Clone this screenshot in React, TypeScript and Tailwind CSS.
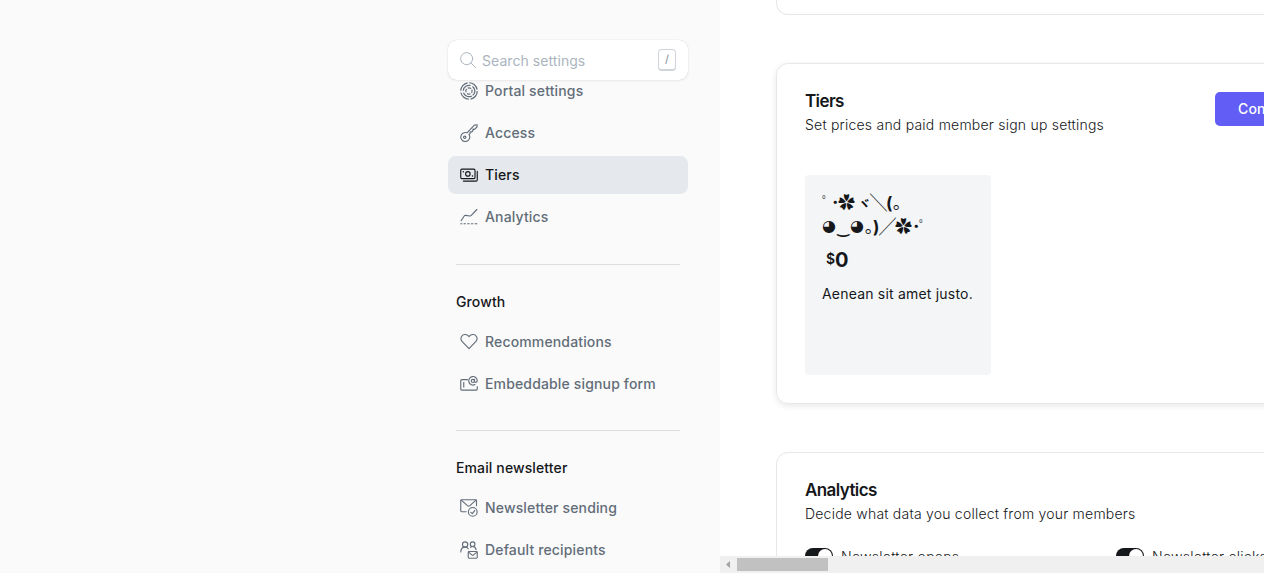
import type { ReactNode } from 'react';

function Icon({ children }: { children: ReactNode }) {
  return (
    <svg className="size-[18px] shrink-0" viewBox="0 0 24 24" fill="none" stroke="currentColor" strokeWidth="1.5" strokeLinecap="round" strokeLinejoin="round">
      {children}
    </svg>
  );
}

const PortalIcon = () => (
  <Icon>
    <g strokeLinecap="butt" strokeWidth="1.6">
      <circle cx="12" cy="12" r="11" strokeDasharray="15 2.28" />
      <circle cx="12" cy="12" r="7.6" strokeDasharray="13.4 2.5" transform="rotate(60 12 12)" />
      <circle cx="12" cy="12" r="4.2" strokeDasharray="4.6 2" transform="rotate(-30 12 12)" />
    </g>
  </Icon>
);
const KeyIcon = () => (
  <Icon>
    <circle cx="6.3" cy="17.7" r="1.6" />
    <path d="M12 14 13.500 12.500V10.500L15.500 10.700 17.300 9V6.900L19.300 7.200 22.600 4 22.900 1.100 19.500 1.300 9.300 11.800A6 6 0 1 0 12 14Z" />
  </Icon>
);
const TiersIcon = () => (
  <Icon>
    <rect x="1" y="4.2" width="19" height="12.6" rx="1.5" />
    <path d="M23 7.2v11.3a1.6 1.6 0 0 1-1.6 1.6H4.5" />
    <circle cx="10.5" cy="10.5" r="3" />
    <path d="M4.4 7.6h.1M16.6 13.4h.1" strokeWidth="2" />
  </Icon>
);
const AnalyticsIcon = () => (
  <Icon>
    <path d="M1.5 17 5.6 10.7c.5-.8 1.2-1 2-.9l5.4.8c.9.1 1.5 0 2-.7L22.5 2" />
    <path d="M1 21h1.5M5.3 21h2M10.2 21h2M15.1 21h2M20 21h2.5" />
  </Icon>
);
const HeartIcon = () => (
  <Icon>
    <path d="m12 20.800-9-9.4A5.6 5.6 0 0 1 1.9 5a5.5 5.5 0 0 1 8.8-1.400L12 4.900l1.300-1.300A5.5 5.5 0 0 1 22.100 5 5.6 5.6 0 0 1 21 11.400Z" />
  </Icon>
);
const FormIcon = () => (
  <Icon>
    <path d="M10 6.200H2.300C1.600 6.200 1 6.800 1 7.500v11.200c0 .8.600 1.400 1.300 1.400h19.400c.7 0 1.300-.6 1.300-1.400v-3.200" />
    <path d="M5 10v6" />
    <circle cx="17.200" cy="7.900" r="2.100" />
    <path d="M19.300 5.900v2.200c0 2.400 3.700 2.200 3.700-.4a5.700 5.700 0 1 0-3 5.100" />
  </Icon>
);
const SendingIcon = () => (
  <Icon>
    <path d="M8.300 17H2.200A1.200 1.200 0 0 1 1 15.800V2.200C1 1.500 1.500 1 2.200 1h18.600c.7 0 1.200.5 1.200 1.200V9" />
    <path d="m1.600 1.600 8.300 7.200c1 .8 2.200.8 3.200 0l8.300-7.200" />
    <circle cx="17" cy="17.200" r="5.800" />
    <path d="m19.600 15.400-3.200 4.100-2-1.700" />
  </Icon>
);
const RecipientsIcon = () => (
  <Icon>
    <circle cx="6.800" cy="4.600" r="3.500" />
    <circle cx="16.800" cy="4.300" r="3.100" />
    <path d="M1 14.600c.2-3.700 2.400-6.500 5.800-6.500 1.900 0 3.300.9 4.200 2.300M14 8.600c.9-.8 1.800-1.200 2.800-1.200 2.400 0 4.100 1.600 4.700 4" />
    <rect x="11" y="14" width="12" height="9" rx="1.200" />
    <path d="m11.500 14.800 4.300 3.700c.7.600 1.700.6 2.400 0l4.300-3.700" />
  </Icon>
);

function NavItem({ icon, label, active }: { icon: ReactNode; label: string; active?: boolean }) {
  return (
    <a className={`flex h-[38px] shrink-0 items-center gap-2 rounded-lg pl-3 text-sm font-[450] ${active ? 'bg-[#e5e9ed] text-[#15171a]' : 'text-[#626d79]'}`}>
      {icon}
      <span className="-ml-px tracking-[0.15px]">{label}</span>
    </a>
  );
}

function NavHeading({ children, className }: { children: ReactNode; className: string }) {
  return (
    <div className={`mx-2 flex h-[59px] shrink-0 items-end border-t border-[#dddee2] pb-[11px] text-sm leading-5 font-[550] tracking-[0.12px] text-[#15171a] ${className}`}>
      <span>{children}</span>
    </div>
  );
}

function Sidebar() {
  return (
    <aside className="flex w-[720px] shrink-0 flex-col bg-[#fafafa] pt-10 pr-8 pl-[448px]">
      <div className="z-10 flex h-10 shrink-0 items-center rounded-[9px] bg-white pr-3 pl-3 shadow-[0_0_1px_rgba(0,0,0,0.22),0_1px_3px_rgba(0,0,0,0.06)]">
        <svg className="size-4 text-[#abb4be]" viewBox="0 0 24 24" fill="none" stroke="currentColor" strokeWidth="1.5" strokeLinecap="round">
          <circle cx="10" cy="10" r="9" />
          <path d="m16.500 16.500 6.700 6.700" />
        </svg>
        <span className="ml-1.5 flex-1 pt-0.5 text-sm tracking-[0.06px] text-[#abb4be]">Search settings</span>
        <span className="flex h-[22px] w-[18px] items-center justify-center rounded border border-b-2 border-[#ced4d9] text-[11px] text-[#7c8b9a]">/</span>
      </div>
      <nav className="-mt-2 flex flex-col gap-1">
        <NavItem icon={<PortalIcon />} label="Portal settings" />
        <NavItem icon={<KeyIcon />} label="Access" />
        <NavItem icon={<TiersIcon />} label="Tiers" active />
        <NavItem icon={<AnalyticsIcon />} label="Analytics" />
      </nav>
      <NavHeading className="mt-7">Growth</NavHeading>
      <nav className="flex flex-col gap-1">
        <NavItem icon={<HeartIcon />} label="Recommendations" />
        <NavItem icon={<FormIcon />} label="Embeddable signup form" />
      </nav>
      <NavHeading className="mt-[27px]">Email newsletter</NavHeading>
      <nav className="flex flex-col gap-1">
        <NavItem icon={<SendingIcon />} label="Newsletter sending" />
        <NavItem icon={<RecipientsIcon />} label="Default recipients" />
      </nav>
    </aside>
  );
}

function SectionTitle({ title, text }: { title: string; text: string }) {
  return (
    <div>
      <h2 className="text-[17px] leading-6 font-[630] tracking-[-0.6px]">{title}</h2>
      <p className="text-sm leading-6 font-light tracking-[0.22px]">{text}</p>
    </div>
  );
}

function Toggle({ label }: { label: string }) {
  return (
    <div className="flex w-[311px] shrink-0 items-start gap-2">
      <span className="flex h-4 w-7 justify-end rounded-full bg-[#15171a] p-px">
        <span className="size-3.5 rounded-full bg-white" />
      </span>
      <span className="-mt-px text-sm leading-5 font-light tracking-[0.28px] text-[#15171a]">{label}</span>
    </div>
  );
}

function TierName() {
  return (
    <div className="text-[17px] leading-6 font-bold whitespace-nowrap">
      <div className="flex h-6">
        <span className="w-[9px] text-[15px] font-light">ﾟ</span>
        <span className="w-[7px]">･</span>
        <span className="w-[20px]">✿</span>
        <span className="w-[12px] text-[13px]">ヾ</span>
        <span className="w-4 font-thin">╲</span>
        <span className="w-[7px]">(</span>
        <span className="font-normal">｡</span>
      </div>
      <div className="flex h-6">
        <span className="w-[14px] font-['DejaVu_Sans'] text-base leading-[22px] font-normal">◕</span>
        <span className="w-[14px]">‿</span>
        <span className="w-[15px] font-['DejaVu_Sans'] text-base leading-[22px] font-normal">◕</span>
        <span className="w-[8px] font-normal">｡</span>
        <span className="w-[6px]">)</span>
        <span className="w-[16px] font-thin">╱</span>
        <span className="w-[17px]">✿</span>
        <span className="w-[7px]">･</span>
        <span className="text-[15px] font-light">ﾟ</span>
      </div>
    </div>
  );
}

function Content() {
  return (
    <main className="flex w-[544px] shrink-0 flex-col overflow-hidden bg-white text-[#15171a]">
      <div className="flex h-[556px] flex-col gap-12 overflow-hidden pl-14">
        <section className="h-[15px] w-[700px] shrink-0 rounded-b-xl border border-t-0 border-[#e5e7eb]" />
        <section className="flex h-[341px] w-[700px] shrink-0 flex-col rounded-xl border border-[#e5e7eb] pt-[25px] pl-7 shadow-[0_2px_6px_rgba(0,0,0,0.09)]">
          <header className="flex">
            <div className="w-[410px]">
              <SectionTitle title="Tiers" text="Set prices and paid member sign up settings" />
            </div>
            <button className="mt-[3px] h-[34px] rounded-[5px] bg-[#625df5] px-[23px] text-sm font-[550] tracking-[0.2px] whitespace-nowrap text-white">Connect with Stripe</button>
          </header>
          <article className="mt-[38px] h-[200px] w-[186px] rounded-sm bg-[#f4f5f6] px-[17px] pt-4">
            <TierName />
            <div className="mt-[9px] flex items-start pl-1 font-bold">
              <span className="text-sm leading-[22px] font-semibold">$</span>
              <span className="text-xl leading-6">0</span>
            </div>
            <p className="mt-3 text-sm leading-5 tracking-[0.2px] whitespace-nowrap">Aenean sit amet justo.</p>
          </article>
        </section>
        <section className="h-[200px] w-[700px] shrink-0 rounded-xl border border-[#e5e7eb] pt-[25px] pl-7">
          <SectionTitle title="Analytics" text="Decide what data you collect from your members" />
          <div className="mt-[22px] flex">
            <Toggle label="Newsletter opens" />
            <Toggle label="Newsletter clicks" />
          </div>
        </section>
      </div>
      <div className="flex h-[17px] items-center bg-[#f0f0f0]">
        <svg className="size-[17px]" viewBox="0 0 17 17" fill="#a3a3a3"><path d="M10 5v7L6 8.500Z" /></svg>
        <div className="h-[13px] w-[91px] bg-[#c1c1c1]" />
      </div>
    </main>
  );
}

export default function App() {
  return (
    <div className="flex h-[573px] w-[1264px] overflow-hidden bg-[#fafafa] font-['Inter','Noto_Sans_CJK_JP',sans-serif]">
      <Sidebar />
      <Content />
    </div>
  );
}
